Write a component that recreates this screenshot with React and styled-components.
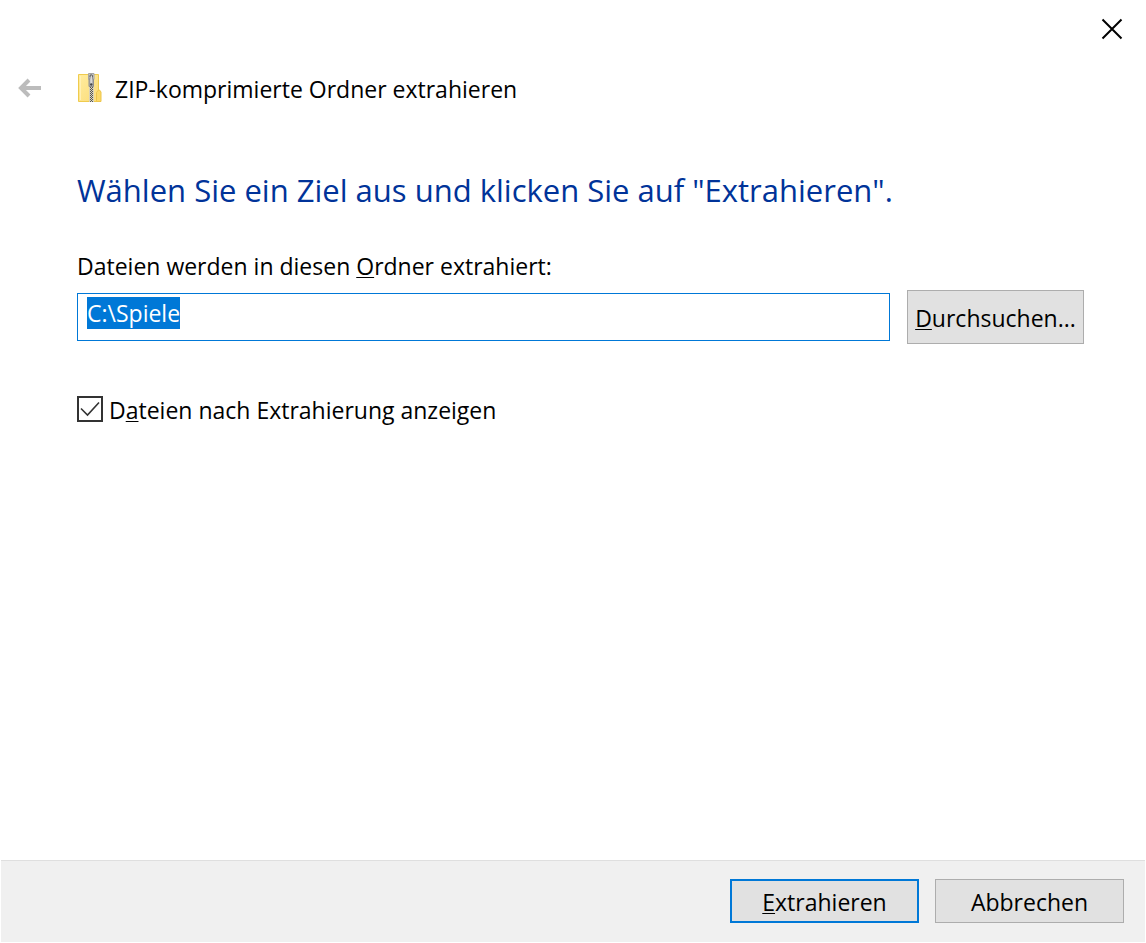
import React, { useEffect, useRef } from "react";
import styled, { createGlobalStyle, css } from "styled-components";

const GlobalStyle = createGlobalStyle`
  * { box-sizing: border-box; }
  body { margin: 0; background: #fff; }
  button, input { font: inherit; color: inherit; }
  u { text-decoration-thickness: 1px; text-underline-offset: 2px; text-decoration-skip-ink: none; }
`;

const Dialog = styled.main`
  display: flex;
  flex-direction: column;
  min-height: 100vh;
  padding: 0 1px 1px;
  background: #fff;
  color: #000;
  font-family: "Segoe UI", "Open Sans", sans-serif;
  font-size: 23px;
  font-weight: 400;
  line-height: 32px;
`;

const TitleBar = styled.div`
  display: flex;
  justify-content: flex-end;
  height: 58px;
`;

const IconButton = styled.button`
  display: flex;
  align-items: center;
  justify-content: center;
  width: ${(p) => p.$width}px;
  padding: 0;
  border: 0;
  background: transparent;
`;

const Header = styled.header`
  display: flex;
  height: 60px;
`;

const Caption = styled.div`
  display: flex;
  align-items: center;
  gap: 13px;
  padding-left: 18px;
`;

const CaptionText = styled.span`
  padding-top: 2px;
`;

const Content = styled.section`
  flex: 1;
  padding: 49px 61px 0 76px;
`;

const Instruction = styled.h1`
  margin: 0 0 37px;
  color: #003399;
  font-size: 31px;
  font-weight: inherit;
  line-height: 46px;
`;

const FieldLabel = styled.label`
  display: block;
  margin-bottom: 8px;
`;

const FieldRow = styled.div`
  display: flex;
  align-items: center;
  gap: 17px;
`;

const PathInput = styled.input`
  flex: 1;
  min-width: 0;
  height: 48px;
  padding: 3px 9px 11px;
  border: 1px solid #0078d7;
  border-radius: 0;
  outline: 0;
  background: #fff;
  line-height: 32px;
  &::selection { background: #0078d7; color: #fff; }
`;

const Button = styled.button`
  width: ${(p) => p.$width}px;
  height: ${(p) => p.$height}px;
  padding: 2px 0 0;
  border: 1px solid #adadad;
  border-radius: 0;
  background: #e1e1e1;
  white-space: nowrap;
  ${(p) => p.$primary && css`
    border: 2px solid #0078d7;
    padding-top: 1px;
  `}
`;

const CheckLabel = styled.label`
  display: flex;
  gap: 6px;
  width: fit-content;
  margin-top: 50px;
`;

const CheckBox = styled.input`
  appearance: none;
  width: 26px;
  height: 26px;
  margin: 0;
  border: 2px solid #333;
  background: #fff;
`;

const CheckFrame = styled.span`
  position: relative;
  display: flex;
  height: 26px;
  margin-top: 2px;
  svg { position: absolute; inset: 0; pointer-events: none; }
  ${CheckBox}:not(:checked) + svg { display: none; }
`;

const Footer = styled.footer`
  display: flex;
  justify-content: flex-end;
  gap: 16px;
  padding: 18px 21px 19px;
  border-top: 1px solid #dfdfdf;
  background: #f0f0f0;
`;

const CloseIcon = () => (
  <svg width="22" height="22" viewBox="0 0 22 22" aria-hidden="true">
    <path d="M1.5 1.5 20.5 20.5M20.5 1.5 1.5 20.5" stroke="#000" strokeWidth="2" />
  </svg>
);

const BackIcon = () => (
  <svg width="24" height="20" viewBox="0 0 24 20" aria-hidden="true">
    <path d="M23 10H3M11 2 3 10l8 8" fill="none" stroke="#bcbcbc" strokeWidth="4" />
  </svg>
);

const ZipFolderIcon = () => (
  <svg width="25" height="30" viewBox="0 0 25 30" aria-hidden="true">
    <defs>
      <linearGradient id="folder" x1="0" y1="0" x2="1" y2="1">
        <stop offset="0" stopColor="#ffec9f" />
        <stop offset="1" stopColor="#fbdc78" />
      </linearGradient>
      <linearGradient id="metal">
        <stop offset="0" stopColor="#999" />
        <stop offset=".5" stopColor="#e2e2e2" />
        <stop offset="1" stopColor="#8c8c8c" />
      </linearGradient>
    </defs>
    <path d="M1.5 1.5h20v27h-20z" fill="url(#folder)" stroke="#efcb4e" />
    <path d="M3.5 3v24" stroke="#fff0b5" />
    <path d="M19.5 28.5v-9l2-2.500h1l1.500 2v9.500z" fill="#fbd968" stroke="#edc54b" />
    <path d="M12 14h5v15h-5z" fill="#d9d2b8" />
    <path d="M13.500 14v15" stroke="#555" strokeDasharray="1 1" />
    <path d="M14.500 15v14" stroke="#555" strokeDasharray="1 1" />
    <path d="M15.500 14v15" stroke="#555" strokeDasharray="1 1" />
    <path d="M11.500.5h5.500v6h-5.500z" fill="#c9c9c9" stroke="#a5a5a5" />
    <path d="M12 13.500V7l1-2V3q0-1.500 1.250-1.500T15.500 3v2l1 2v6.500z" fill="url(#metal)" stroke="#909090" />
    <path d="M13 4V2.500q1.250-1 2.500 0V4" fill="none" stroke="#666" />
    <circle cx="14.250" cy="11.500" r="1.200" fill="#444" />
  </svg>
);

const CheckIcon = () => (
  <svg width="26" height="26" viewBox="0 0 26 26" aria-hidden="true">
    <path d="M4 12.500 10.500 19 22 6.500" fill="none" stroke="#333" strokeWidth="1.600" />
  </svg>
);

export default function App() {
  const path = useRef(null);

  useEffect(() => {
    path.current.focus();
    path.current.select();
  }, []);

  return (
    <>
      <GlobalStyle />
      <Dialog>
        <TitleBar>
          <IconButton $width={66} type="button" aria-label="Schließen"><CloseIcon /></IconButton>
        </TitleBar>
        <Header>
          <IconButton $width={58} type="button" aria-label="Zurück" disabled><BackIcon /></IconButton>
          <Caption>
            <ZipFolderIcon />
            <CaptionText>ZIP-komprimierte Ordner extrahieren</CaptionText>
          </Caption>
        </Header>
        <Content>
          <Instruction>Wählen Sie ein Ziel aus und klicken Sie auf "Extrahieren".</Instruction>
          <FieldLabel htmlFor="target">Dateien werden in diesen <u>O</u>rdner extrahiert:</FieldLabel>
          <FieldRow>
            <PathInput id="target" type="text" ref={path} defaultValue="C:\Spiele" />
            <Button $width={177} $height={54} type="button"><u>D</u>urchsuchen...</Button>
          </FieldRow>
          <CheckLabel>
            <CheckFrame>
              <CheckBox type="checkbox" defaultChecked />
              <CheckIcon />
            </CheckFrame>
            <span>D<u>a</u>teien nach Extrahierung anzeigen</span>
          </CheckLabel>
        </Content>
        <Footer>
          <Button $width={189} $height={44} $primary type="button"><u>E</u>xtrahieren</Button>
          <Button $width={189} $height={44} type="button">Abbrechen</Button>
        </Footer>
      </Dialog>
    </>
  );
}
